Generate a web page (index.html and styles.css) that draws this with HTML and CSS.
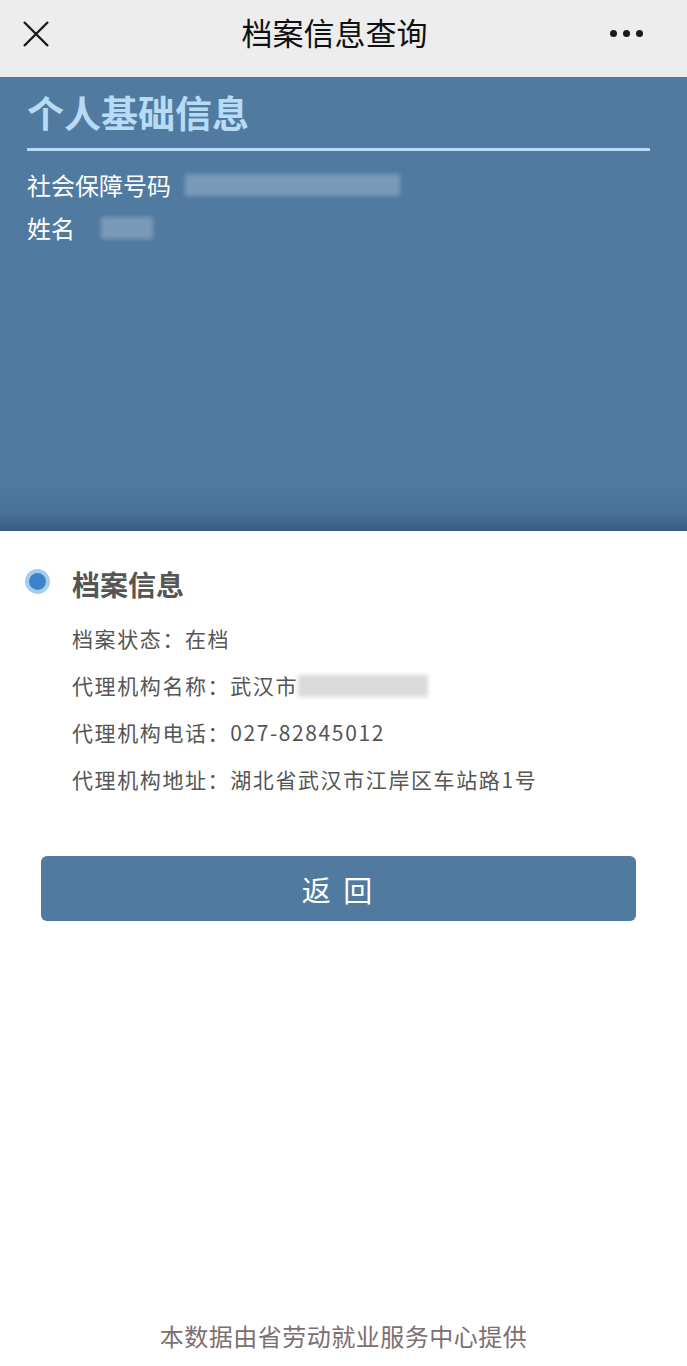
FILE: index.html
```html
<!DOCTYPE html>
<html lang="zh-CN">
<head>
  <meta charset="UTF-8">
  <title>档案信息查询</title>
  <link rel="stylesheet" href="styles.css">
</head>
<body>
  <div class="navbar">
    <svg class="nav-close" width="28" height="28" viewBox="0 0 28 28">
      <path d="M2 2 L26 26 M26 2 L2 26" stroke="#1a1a1a" stroke-width="2.4" fill="none"/>
    </svg>
    <div class="nav-title">档案信息查询</div>
    <div class="nav-more"><span></span><span></span><span></span></div>
  </div>

  <div class="base-panel">
    <h1 class="base-title">个人基础信息</h1>
    <div class="base-row">社会保障号码<span class="mask mask-long"></span></div>
    <div class="base-row">姓名<span class="mask mask-short"></span></div>
  </div>

  <div class="archive">
    <div class="archive-head">
      <span class="dot"></span>
      <h2>档案信息</h2>
    </div>
    <div class="archive-row">档案状态：在档</div>
    <div class="archive-row">代理机构名称：武汉市<span class="mask mask-light"></span></div>
    <div class="archive-row">代理机构电话：027-82845012</div>
    <div class="archive-row">代理机构地址：湖北省武汉市江岸区车站路1号</div>
  </div>

  <div class="btn-wrap">
    <button class="btn-back">返 回</button>
  </div>

  <div class="footer">本数据由省劳动就业服务中心提供</div>
</body>
</html>
```

FILE: styles.css
```css
body {
  margin: 0;
  width: 687px;
  height: 1366px;
  background: #fff;
  font-family: "Noto Sans CJK SC", "Noto Sans", sans-serif;
  display: flex;
  flex-direction: column;
  overflow: hidden;
}

.navbar {
  height: 77px;
  background: #ededed;
  display: flex;
  align-items: center;
  justify-content: space-between;
  padding: 0 44px 0 22px;
  position: relative;
}

.nav-close {
  margin-top: -10px;
}

.nav-title {
  position: absolute;
  left: 0;
  right: 18px;
  top: 10px;
  text-align: center;
  font-size: 31px;
  font-weight: 400;
  color: #111;
  line-height: 44px;
}

.nav-more {
  display: flex;
  gap: 6px;
  margin-top: -10px;
}

.nav-more span {
  width: 7px;
  height: 7px;
  border-radius: 50%;
  background: #1a1a1a;
}

.base-panel {
  height: 454px;
  box-sizing: border-box;
  background: linear-gradient(to bottom, #507aa0 0, #507aa0 405px, #4a7299 435px, #3a5d82 454px);
  padding: 9px 37px 0 27px;
}

.base-title {
  margin: 0;
  font-size: 37px;
  font-weight: 700;
  color: #b8dbf5;
  line-height: 52px;
  padding-bottom: 10px;
  border-bottom: 3px solid #b8dbf5;
  margin-bottom: 12px;
}

.base-row {
  font-size: 24px;
  color: #fff;
  line-height: 43px;
  display: flex;
  align-items: center;
}

.mask {
  display: inline-block;
  height: 22px;
  background: rgba(200, 215, 230, 0.35);
  filter: blur(2px);
}

.mask-long {
  width: 215px;
  margin-left: 14px;
}

.mask-short {
  width: 52px;
  margin-left: 26px;
}

.mask-light {
  width: 130px;
  margin-left: 0;
  background: rgba(150, 150, 150, 0.35);
}

.archive {
  padding: 30px 24px 0 25px;
}

.archive-head {
  display: flex;
  align-items: center;
  margin-bottom: 8px;
}

.dot {
  width: 17px;
  height: 17px;
  border-radius: 50%;
  background: #3b84cc;
  border: 4px solid #a7cdee;
  margin-right: 22px;
  margin-top: -6px;
}

.archive-head h2 {
  margin: 0;
  font-size: 28px;
  font-weight: 700;
  color: #555;
  line-height: 46px;
}

.archive-row {
  padding-left: 47px;
  font-size: 21px;
  letter-spacing: 1.6px;
  color: #555;
  line-height: 47px;
  display: flex;
  align-items: center;
}

.btn-wrap {
  padding: 53px 51px 0 41px;
}

.btn-back {
  width: 100%;
  height: 65px;
  border: none;
  border-radius: 6px;
  background: #507aa0;
  color: #fff;
  font-family: inherit;
  font-size: 29px;
  letter-spacing: 3px;
}

.footer {
  margin-top: auto;
  margin-bottom: 13px;
  text-align: center;
  font-size: 24px;
  letter-spacing: 0.5px;
  color: #7d6e72;
  line-height: 34px;
}
```
